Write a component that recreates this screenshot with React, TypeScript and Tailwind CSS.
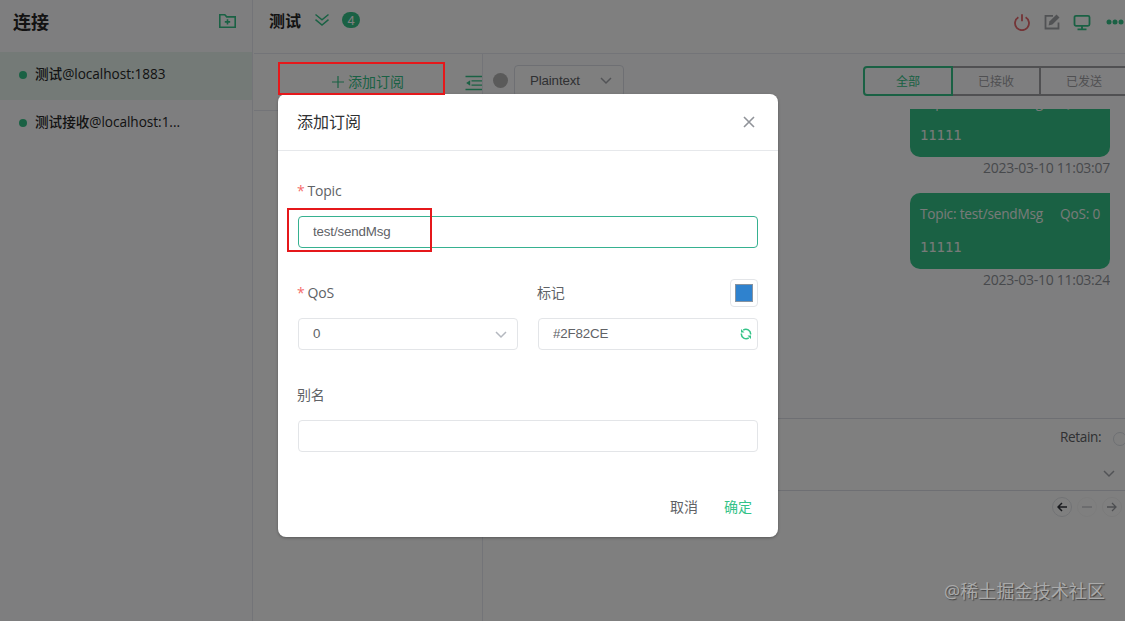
import { useState } from "react";
import type { ReactNode } from "react";
import clsx from "clsx";

type Connection = {
  id: string;
  label: string;
};

type Message = {
  id: string;
  topic: string;
  qos: number;
  payload: string;
  createdAt: string;
};

const connections: Connection[] = [
  { id: "local", label: "测试@localhost:1883" },
  { id: "receive", label: "测试接收@localhost:1..." },
];

const messages: Message[] = [
  { id: "1", topic: "test/sendMsg", qos: 0, payload: "11111", createdAt: "2023-03-10 11:03:07" },
  { id: "2", topic: "test/sendMsg", qos: 0, payload: "11111", createdAt: "2023-03-10 11:03:24" },
];

const filters = ["全部", "已接收", "已发送"];

function ChevronDown({ className }: { className?: string }) {
  return (
    <svg viewBox="0 0 12 8" className={clsx("h-2 w-3", className)} fill="none" stroke="currentColor" strokeWidth="1.5">
      <path d="M1 1l5 5 5-5" />
    </svg>
  );
}

function Sidebar() {
  const [active, setActive] = useState("local");

  return (
    <aside className="w-[253px] shrink-0 border-r border-[#e6e8f1] bg-[#fdfdff]">
      <div className="flex h-[52px] items-start justify-between pl-[13px] pr-4">
        <h1 className="pt-[9px] text-[18px] font-bold leading-[27px] text-[#262626]">连接</h1>
        <svg viewBox="0 0 17 15" className="mt-[14px] h-[15px] w-[17px] text-[#34c388]" fill="none" stroke="currentColor" strokeWidth="1.6">
          <path d="M.8 13.2V.8h5l1.9 2.1h8.5v10.3z" />
          <path d="M8.5 5.2v5.4M5.8 7.9h5.4" />
        </svg>
      </div>
      {connections.map(item => (
        <div
          key={item.id}
          onClick={() => setActive(item.id)}
          className={clsx("flex h-12 items-center pb-1 pl-[19px]", item.id === active && "bg-[#e8f4ef]")}
        >
          <span className="mt-px size-2 rounded-full bg-[#34c388]" />
          <span className="ml-2 text-[13.6px] font-medium tracking-[-0.03px] text-[#262626]">{item.label}</span>
        </div>
      ))}
    </aside>
  );
}

function Header() {
  return (
    <header className="flex h-[54px] shrink-0 items-start border-b border-[#e6e8f1] bg-white pl-[15px]">
      <h2 className="pt-[9px] text-[16px] font-bold leading-6 text-[#262626]">测试</h2>
      <svg viewBox="0 0 16 14" className="ml-[13px] mt-[13px] h-[14px] w-4 text-[#34c388]" fill="none" stroke="currentColor" strokeWidth="1.5">
        <path d="M1.500 1.500L8 6.800l6.500-5.300M1.500 6.700L8 12l6.500-5.300" />
      </svg>
      <span className="ml-3 mt-3 flex h-4 w-[18px] items-center justify-center rounded-full bg-[#34c388] pt-[2px] font-['Liberation_Sans',sans-serif] text-[13px] text-white">
        4
      </span>
      <div className="ml-[654px] flex shrink-0 items-start">
        <svg viewBox="0 0 16 17" className="mt-[14px] h-[17px] w-4 text-[#e8686d]" fill="none" stroke="currentColor" strokeWidth="1.8">
          <path d="M4.400 3.200a7 7 0 1 0 7.200 0M8 .3v7" />
        </svg>
        <svg viewBox="0 0 16 16" className="ml-[14px] mt-[14px] size-4 text-[#a2a5a9]" fill="none" stroke="currentColor" strokeWidth="1.8">
          <path d="M9 1.800H1.500v12.700h13V8.500" />
          <path d="M4.600 11.400l.800-3.800L12.500.500l3 3L8.400 10.600z" fill="currentColor" stroke="none" />
        </svg>
        <svg viewBox="0 0 18 17" className="ml-[13px] mt-[14px] h-[17px] w-[18px] text-[#34c388]" fill="none" stroke="currentColor" strokeWidth="1.8">
          <rect x="1.500" y="1.800" width="15" height="10" rx="1.500" />
          <path d="M9 12v3.500M4.500 15.300h9" />
        </svg>
        <svg viewBox="0 0 18 6" className="ml-[15px] mt-[19px] h-[6px] w-[18px] text-[#34c388]" fill="currentColor">
          <circle cx="3" cy="3" r="2.500" />
          <circle cx="9" cy="3" r="2.500" />
          <circle cx="15" cy="3" r="2.500" />
        </svg>
      </div>
    </header>
  );
}

function Subscriptions() {
  return (
    <section className="w-[229px] shrink-0 border-r border-[#e6e8f1] bg-white">
      <div className="flex h-[57px] items-start border-b border-[#e6e8f1]">
        <button className="ml-[78px] mt-[17px] flex items-center text-[14px] leading-[22px] text-[#34c388]">
          <svg viewBox="0 0 12 12" className="mr-1 size-3" stroke="currentColor" strokeWidth="1.200">
            <path d="M6 0v12M0 6h12" />
          </svg>
          添加订阅
        </button>
        <svg viewBox="0 0 17 16" className="ml-auto mt-[21px] h-4 w-[17px] shrink-0 text-[#34c388]" fill="none" stroke="currentColor" strokeWidth="1.300">
          <path d="M.500 1.500H17M6.500 5.800H17M6.500 10.200H17M.500 14.500H17" />
          <path d="M1.200 8l4-2.800v5.600z" fill="currentColor" stroke="none" />
        </svg>
      </div>
    </section>
  );
}

function MessageBubble({ message }: { message: Message }) {
  return (
    <div className="mb-[14px] flex flex-col items-end">
      <div className="h-[76px] w-[200px] rounded-[10px] rounded-tr-none bg-[#34c388] px-[10px] pt-[10px] text-[#f0f5f2]">
        <div className="flex justify-between text-[13.600px] leading-[22px] tracking-[-0.200px]">
          <span>Topic: {message.topic}</span>
          <span>QoS: {message.qos}</span>
        </div>
        <pre className="mt-[11px] font-['DejaVu_Sans_Mono',monospace] text-[13.800px] leading-[22px]">{message.payload}</pre>
      </div>
      <time className="text-[14px] leading-[22px] tracking-[-0.270px] text-[#8f9399]">{message.createdAt}</time>
    </div>
  );
}

function MessagePanel() {
  const [filter, setFilter] = useState("全部");

  return (
    <section className="flex w-[660px] shrink-0 flex-col bg-[#fdfdff]">
      <div className="flex h-[55px] shrink-0 items-start">
        <span className="ml-[10px] mt-[19px] size-[15px] rounded-full bg-[#b4b4b4]" />
        <div className="ml-[6px] mt-[11px] flex h-8 w-[110px] items-center justify-between rounded border border-[#dcdfe6] bg-white pl-[15px] pr-[11px] font-['Liberation_Sans',sans-serif] text-[13.333px] tracking-[-0.150px] text-[#606266]">
          Plaintext
          <ChevronDown className="text-[#a4a7ad]" />
        </div>
        <div className="ml-[239px] mt-3 flex shrink-0">
          {filters.map((name, i) => (
            <button
              key={name}
              onClick={() => setFilter(name)}
              className={clsx(
                "h-[30px] border-2 pt-[2px] text-[12px]",
                i === 0 ? "w-[90px] rounded-l" : "w-[90px] -ml-[2px]",
                name === filter ? "relative border-[#34c388] text-[#34c388]" : "border-[#a0a0a4] text-[#a0a0a4]"
              )}
            >
              {name}
            </button>
          ))}
        </div>
      </div>
      <div className="flex h-[309px] w-[627px] shrink-0 flex-col overflow-hidden">
        <div className="-mt-[28px]">
          {messages.map(message => (
            <MessageBubble key={message.id} message={message} />
          ))}
        </div>
      </div>
      <div className="flex grow flex-col border-t border-[#dcdfe6] bg-white">
        <div className="h-[72px] shrink-0 border-b border-[#dcdfe6]">
          <div className="ml-[577px] flex items-center pt-[7px] text-[13.600px] leading-[22px] tracking-[-0.350px] text-[#606266]">
            Retain:
            <span className="ml-3 mt-[3px] size-[14px] rounded-full border border-[#dcdfe6]" />
          </div>
          <ChevronDown className="ml-[620px] mt-[22px] text-[#a4a7ad]" />
        </div>
        <div className="ml-[569px] mt-[6px] flex gap-[5px]">
          <span className="flex size-5 items-center justify-center rounded-full border border-[#e3e5ea] text-[#30333a]">
            <svg viewBox="0 0 10 10" className="size-[10px]" fill="none" stroke="currentColor" strokeWidth="1.500">
              <path d="M5 1L1 5l4 4M1 5h9" />
            </svg>
          </span>
          <span className="flex size-5 items-center justify-center rounded-full border border-[#f8f8f8] text-[#b0b3b9]">
            <svg viewBox="0 0 10 10" className="size-[10px]" stroke="currentColor">
              <path d="M0 5h10" />
            </svg>
          </span>
          <span className="flex size-5 items-center justify-center rounded-full border border-[#f5f5f5] text-[#9a9da3]">
            <svg viewBox="0 0 10 10" className="size-[10px]" fill="none" stroke="currentColor" strokeWidth="1.300">
              <path d="M5 1l4 4-4 4M9 5H0" />
            </svg>
          </span>
        </div>
      </div>
    </section>
  );
}

function Label({ required, children }: { required?: boolean; children: ReactNode }) {
  return (
    <label className="-ml-px flex h-[42px] items-center pb-[2px] text-[14px] tracking-[-0.200px] text-[#606266]">
      {required && <span className="mr-[3px] text-[#f56c6c]">*</span>}
      {children}
    </label>
  );
}

const inputClass =
  "h-8 w-full rounded border bg-white px-[14px] font-['Liberation_Sans',sans-serif] text-[13.333px] tracking-[-0.150px] text-[#606266] outline-none";

function SubscribeDialog() {
  const [topic, setTopic] = useState("test/sendMsg");
  const [color, setColor] = useState("#2F82CE");
  const [alias, setAlias] = useState("");

  return (
    <div className="absolute left-[278px] top-[94px] h-[443px] w-[500px] rounded-lg bg-white shadow-[0_1px_3px_rgba(0,0,0,0.3)]">
      <div className="flex h-[57px] items-center justify-between border-b border-[#e6e8eb] pl-[19px] pr-[23px]">
        <h3 className="text-[16px] text-[#303133]">添加订阅</h3>
        <svg viewBox="0 0 12 12" className="size-3 text-[#909399]" stroke="currentColor" strokeWidth="1.600">
          <path d="M1 1l10 10M11 1L1 11" />
        </svg>
      </div>
      <form className="px-5 pt-[19px]" onSubmit={e => e.preventDefault()}>
        <Label required>Topic</Label>
        <input
          className={clsx(inputClass, "mt-[4px] border-[#36b190] pb-[2px]")}
          value={topic}
          onChange={e => setTopic(e.target.value)}
        />
        <div className="mt-[24px] flex gap-5">
          <div className="w-[220px]">
            <Label required>QoS</Label>
            <div className={clsx(inputClass, "mt-[4px] flex items-center justify-between border-[#e3e5e8]")}>
              0
              <ChevronDown className="-mr-[4px] mt-[2px] text-[#b4b8bf]" />
            </div>
          </div>
          <div className="w-[220px]">
            <div className="flex items-center justify-between">
              <Label>标记</Label>
              <span className="flex size-7 items-center justify-center rounded border border-[#e3e5e8]">
                <span className="size-[18px] border border-[#8793a0] bg-[#2f82ce]" />
              </span>
            </div>
            <div className={clsx(inputClass, "mt-[4px] flex items-center border-[#e3e5e8]")}>
              <input className="w-full grow outline-none" value={color} onChange={e => setColor(e.target.value)} />
              <svg viewBox="0 0 12 12" className="-mr-[9px] size-3 shrink-0 text-[#34c388]" fill="none" stroke="currentColor" strokeWidth="1.500">
                <path d="M3.200 2.200A4.700 4.700 0 0 1 10.600 6.500M8.800 9.800A4.700 4.700 0 0 1 1.400 5.500" />
                <path d="M1 1v3.500h3.500zM11 11V7.500H7.500z" fill="currentColor" stroke="none" />
              </svg>
            </div>
          </div>
        </div>
        <div className="mt-[24px]">
          <Label>别名</Label>
          <input
            className={clsx(inputClass, "mt-[4px] border-[#e3e5e8]")}
            value={alias}
            onChange={e => setAlias(e.target.value)}
          />
        </div>
        <div className="mt-[44px] flex justify-end gap-[26px] pr-[6px] text-[14px] leading-[22px]">
          <button type="button" className="text-[#606266]">取消</button>
          <button type="submit" className="text-[#34c388]">确定</button>
        </div>
      </form>
    </div>
  );
}

export default function App() {
  return (
    <div className="relative flex h-[621px] w-[1125px] overflow-hidden bg-white font-['Open_Sans','Noto_Sans_CJK_SC',sans-serif]">
      <Sidebar />
      <main className="flex min-w-0 grow flex-col overflow-hidden pl-px">
        <Header />
        <div className="flex grow">
          <Subscriptions />
          <MessagePanel />
        </div>
      </main>

      {/* Dialog mask */}
      <div className="absolute inset-0 bg-black/50" />
      <SubscribeDialog />

      {/* Highlight boxes */}
      <div className="absolute left-[278px] top-[62px] h-[33px] w-[167px] border-2 border-[#e5181b]" />
      <div className="absolute left-[287px] top-[208px] h-[44px] w-[145px] border-2 border-[#e5181b]" />

      <div className="absolute left-[944px] top-[578px] whitespace-nowrap text-[18px] leading-[26px] tracking-[0.100px] text-[#aaaaaa] [text-shadow:1px_1px_1px_#444]">
        @稀土掘金技术社区
      </div>
    </div>
  );
}
